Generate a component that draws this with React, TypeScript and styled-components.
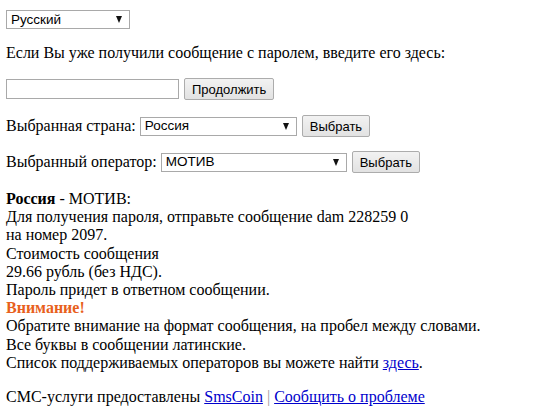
import React, { useState } from 'react';
import styled, { createGlobalStyle } from 'styled-components';

const GlobalStyle = createGlobalStyle`
    body {
        margin: 0;
        background: #fff;
        font-family: "Liberation Serif", "Times New Roman", serif;
        font-size: 16px;
        color: #000;
    }
`;

const Page = styled.div`
    padding: 10px 6px;
    display: flex;
    flex-direction: column;
    align-items: flex-start;
`;

const Row = styled.div<{ $top: number }>`
    display: flex;
    align-items: center;
    gap: 5px;
    margin-top: ${(p) => p.$top}px;
    line-height: 18px;
`;

const Label = styled.span`
    margin-right: -1px;
`;

const SelectBox = styled.div<{ $width: number }>`
    width: ${(p) => p.$width}px;
    height: 19px;
    box-sizing: border-box;
    border: 1px solid #a9a9a9;
    background: #fff;
    display: flex;
    align-items: center;
    justify-content: space-between;
    padding: 0 7px 0 4px;
    font-family: "Liberation Sans", Arial, sans-serif;
    font-size: 13.5px;
    color: #000;
`;

const Arrow = styled.span`
    width: 0;
    height: 0;
    border-left: 3.5px solid transparent;
    border-right: 3.5px solid transparent;
    border-top: 7px solid #111;
`;

const TextInput = styled.input`
    width: 173px;
    height: 20px;
    box-sizing: border-box;
    border: 1px solid #a9a9a9;
    margin: 0;
    padding: 0 3px;
    font-family: "Liberation Sans", Arial, sans-serif;
    font-size: 13px;
    outline: none;
`;

const Button = styled.button`
    height: 22px;
    box-sizing: border-box;
    padding: 0 7px;
    margin: 0;
    border: 1px solid #acacac;
    border-radius: 2px;
    background: linear-gradient(#f2f2f2, #e2e2e2);
    font-family: "Liberation Sans", Arial, sans-serif;
    font-size: 13px;
    color: #000;
`;

const Info = styled.div`
    margin-top: 17px;
    line-height: 18.2px;
`;

const Line = styled.div``;

const Warning = styled.b`
    color: #e8601c;
`;

const Link = styled.a`
    color: #0000cc;
    text-decoration: underline;
`;

const Divider = styled.span`
    color: #999;
`;

const Footer = styled.div`
    margin-top: 16px;
    line-height: 18px;
`;

const App = () => {
    const [code, setCode] = useState('');
    return (
        <>
            <GlobalStyle />
            <Page>
                <SelectBox $width={124}>
                    <span>Русский</span>
                    <Arrow />
                </SelectBox>
                <Row $top={15}>Если Вы уже получили сообщение с паролем, введите его здесь:</Row>
                <Row $top={16}>
                    <TextInput value={code} onChange={(e) => setCode(e.target.value)} />
                    <Button>Продолжить</Button>
                </Row>
                <Row $top={15}>
                    <Label>Выбранная страна:</Label>
                    <SelectBox $width={157}>
                        <span>Россия</span>
                        <Arrow />
                    </SelectBox>
                    <Button>Выбрать</Button>
                </Row>
                <Row $top={14}>
                    <Label>Выбранный оператор:</Label>
                    <SelectBox $width={186}>
                        <span>МОТИВ</span>
                        <Arrow />
                    </SelectBox>
                    <Button>Выбрать</Button>
                </Row>
                <Info>
                    <Line><b>Россия</b> - МОТИВ:</Line>
                    <Line>Для получения пароля, отправьте сообщение dam 228259 0</Line>
                    <Line>на номер 2097.</Line>
                    <Line>Стоимость сообщения</Line>
                    <Line>29.66 рубль (без НДС).</Line>
                    <Line>Пароль придет в ответном сообщении.</Line>
                    <Line><Warning>Внимание!</Warning></Line>
                    <Line>Обратите внимание на формат сообщения, на пробел между словами.</Line>
                    <Line>Все буквы в сообщении латинские.</Line>
                    <Line>Список поддерживаемых операторов вы можете найти <Link href="#">здесь</Link>.</Line>
                </Info>
                <Footer>
                    СМС-услуги предоставлены <Link href="#">SmsCoin</Link> <Divider>|</Divider> <Link href="#">Сообщить о проблеме</Link>
                </Footer>
            </Page>
        </>
    );
};

export default App;
